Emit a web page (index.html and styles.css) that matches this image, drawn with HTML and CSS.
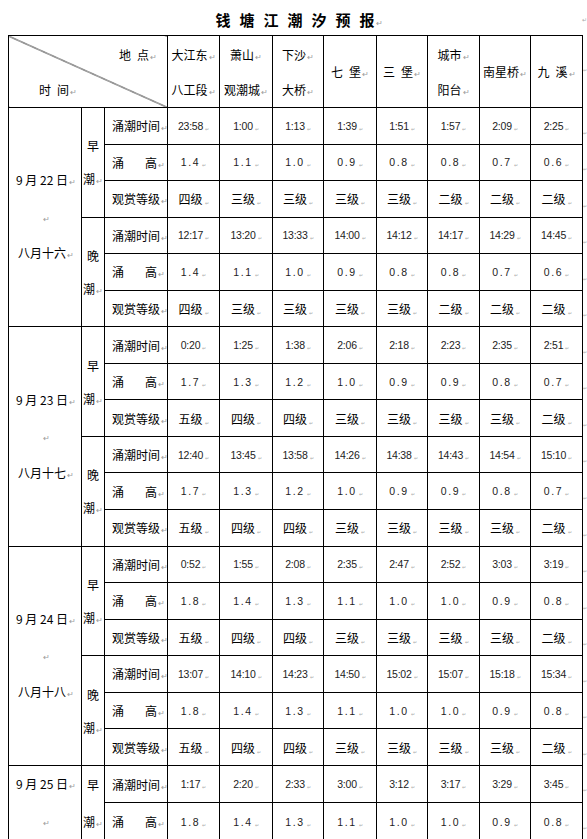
FILE: index.html
```html
<!DOCTYPE html>
<html lang="zh">
<head>
<meta charset="utf-8">
<title>钱塘江潮汐预报</title>
<link rel="stylesheet" href="styles.css">
</head>
<body>
<div class="title-row">
<h1 class="title"><span class="sp">钱塘江潮汐预</span>报<span class="m">↵</span></h1>
<span class="title-rm">↵</span>
</div>
<table class="tide">
<colgroup>
<col class="c-date"><col class="c-half"><col class="c-label">
<col class="c1"><col class="c2"><col class="c3"><col class="c4"><col class="c5"><col class="c6"><col class="c7"><col class="c8"><col class="c-rm">
</colgroup>
<tbody>
<tr class="head">
<td colspan="3" class="corner"><div class="corner-in"><span class="place">地&ensp;点<span class="m">↵</span></span><span class="time">时&ensp;间<span class="m">↵</span></span></div></td>
<td class="h2">大江东<span class="m">↵</span><br>八工段<span class="m">↵</span></td>
<td class="h2">萧山<span class="m">↵</span><br>观潮城<span class="m">↵</span></td>
<td class="h2">下沙<span class="m">↵</span><br>大桥<span class="m">↵</span></td>
<td>七&ensp;堡<span class="m">↵</span></td>
<td>三&ensp;堡<span class="m">↵</span></td>
<td class="h2">城市<span class="m">↵</span><br>阳台<span class="m">↵</span></td>
<td>南星桥<span class="m">↵</span></td>
<td>九&ensp;溪<span class="m">↵</span></td>
<td class="rm"><span class="ms">↵</span></td>
</tr>
</tbody>
<tbody id="body"></tbody>
</table>
<script src="script.js"></script>
</body>
</html>
```
FILE: script.js
```js
const days = [
  { date: "9 月 22 日", lunar: "八月十六", parts: [
    ["早", ["23:58","1:00","1:13","1:39","1:51","1:57","2:09","2:25"], ["1.4","1.1","1.0","0.9","0.8","0.8","0.7","0.6"], ["四级","三级","三级","三级","三级","二级","二级","二级"]],
    ["晚", ["12:17","13:20","13:33","14:00","14:12","14:17","14:29","14:45"], ["1.4","1.1","1.0","0.9","0.8","0.8","0.7","0.6"], ["四级","三级","三级","三级","三级","二级","二级","二级"]]
  ]},
  { date: "9 月 23 日", lunar: "八月十七", parts: [
    ["早", ["0:20","1:25","1:38","2:06","2:18","2:23","2:35","2:51"], ["1.7","1.3","1.2","1.0","0.9","0.9","0.8","0.7"], ["五级","四级","四级","三级","三级","三级","三级","二级"]],
    ["晚", ["12:40","13:45","13:58","14:26","14:38","14:43","14:54","15:10"], ["1.7","1.3","1.2","1.0","0.9","0.9","0.8","0.7"], ["五级","四级","四级","三级","三级","三级","三级","二级"]]
  ]},
  { date: "9 月 24 日", lunar: "八月十八", parts: [
    ["早", ["0:52","1:55","2:08","2:35","2:47","2:52","3:03","3:19"], ["1.8","1.4","1.3","1.1","1.0","1.0","0.9","0.8"], ["五级","四级","四级","三级","三级","三级","三级","二级"]],
    ["晚", ["13:07","14:10","14:23","14:50","15:02","15:07","15:18","15:34"], ["1.8","1.4","1.3","1.1","1.0","1.0","0.9","0.8"], ["五级","四级","四级","三级","三级","三级","三级","二级"]]
  ]},
  { date: "9 月 25 日", lunar: null, parts: [
    ["早", ["1:17","2:20","2:33","3:00","3:12","3:17","3:29","3:45"], ["1.8","1.4","1.3","1.1","1.0","1.0","0.9","0.8"], null]
  ]}
];

const body = document.getElementById("body");
const M = '<span class="m">↵</span>';
const SM = '<span class="ms">↵</span>';

days.forEach(day => {
  const nRows = day.parts.reduce((s, p) => s + (p[3] ? 3 : 2), 0);
  day.parts.forEach((p, pi) => {
    const rows = [
      ["time", '涌潮时间' + M, p[1]],
      ["height", '<span class="jt"><span>涌</span><span>高</span></span>' + M, p[2]]
    ];
    if (p[3]) rows.push(["grade", '观赏等级' + M, p[3]]);
    rows.forEach((r, ri) => {
      const tr = document.createElement("tr");
      tr.className = "r";
      let html = "";
      if (pi === 0 && ri === 0) {
        const lines = day.lunar
          ? day.date + M + '<br>' + M + '<br>' + day.lunar + M
          : day.date + M + '<br>' + M;
        html += `<td class="date" rowspan="${nRows}">${lines}</td>`;
      }
      if (ri === 0) {
        html += `<td class="half${day.lunar ? "" : " half-last"}" rowspan="${rows.length}">${p[0]}<br>潮${M}</td>`;
      }
      html += `<td class="label">${r[1]}</td>`;
      r[2].forEach(v => {
        html += `<td class="v ${r[0]}">${v}${SM}</td>`;
      });
      html += `<td class="rm"><span class="ms">↵</span></td>`;
      tr.innerHTML = html;
      body.appendChild(tr);
    });
  });
});
```
FILE: styles.css
```css
html, body {
  margin: 0;
  padding: 0;
  background: #fff;
}
body {
  padding: 0 0 0 8px;
  font-family: "Noto Sans CJK SC", "Noto Sans", sans-serif;
  color: #000;
}
.title-row {
  display: flex;
  align-items: flex-start;
  height: 35px;
  width: 579px;
}
.title {
  flex: 1;
  margin: 0;
  line-height: 40px;
  font-size: 15px;
  font-weight: 700;
  text-align: center;
  padding-left: 8px;
}
.title .sp {
  letter-spacing: 9px;
}
.title-rm {
  font-size: 6px;
  color: #aaa;
  line-height: 40px;
}
.m {
  font-size: 8px;
  line-height: 0;
  color: #9a9a9a;
  font-weight: 400;
  letter-spacing: 0;
  margin-left: 1px;
}
.ms {
  font-size: 5px;
  line-height: 0;
  color: #aaa;
  margin-left: 2px;
  vertical-align: -1px;
  letter-spacing: 0;
}
.tide {
  border-collapse: collapse;
  table-layout: fixed;
  width: 579px;
  font-size: 12px;
}
.c-date { width: 73px; }
.c-half { width: 23px; }
.c-label { width: 63px; }
.c1 { width: 52px; }
.c2 { width: 53px; }
.c3 { width: 51px; }
.c4 { width: 53px; }
.c5 { width: 51px; }
.c6 { width: 52px; }
.c7 { width: 51px; }
.c8 { width: 52px; }
.c-rm { width: 5px; }
.tide td {
  border: 1px solid #000;
  padding: 0;
  text-align: center;
  vertical-align: middle;
  white-space: nowrap;
  overflow: hidden;
}
.tide td.rm {
  border: none;
  text-align: left;
  vertical-align: top;
  padding-top: 12px;
}
.tide td.rm .ms {
  margin-left: 0;
}
.head {
  height: 72px;
}
.head td {
  line-height: 35px;
}
.corner {
  background: linear-gradient(to top right, transparent calc(50% - 0.7px), #000 50%, transparent calc(50% + 0.7px));
}
.corner-in {
  display: flex;
  flex-direction: column;
  height: 70px;
  justify-content: space-between;
  line-height: 35px;
}
.place {
  align-self: flex-end;
  padding-right: 10px;
}
.time {
  align-self: flex-start;
  padding-left: 30px;
}
.r {
  height: 36.55px;
}
.date {
  line-height: 36.5px;
  padding-left: 2px !important;
}
.half {
  line-height: 33px;
}
.half-last {
  line-height: 37px;
}
.label {
  text-align: left !important;
  padding-left: 7px !important;
}
.jt {
  display: inline-flex;
  justify-content: space-between;
  width: 45px;
  vertical-align: top;
}
.v {
  font-family: "Liberation Sans", Arial, sans-serif;
  font-size: 10.5px;
  color: #222;
}
.v.time {
  letter-spacing: -0.2px;
}
.v.height {
  letter-spacing: 1.6px;
}
.v.grade {
  font-family: "Noto Sans CJK SC", sans-serif;
  font-size: 12px;
  color: #000;
}
```
